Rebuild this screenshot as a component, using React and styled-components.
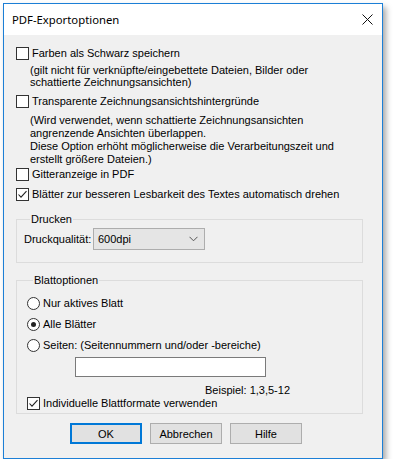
import React from 'react'
import styled, { createGlobalStyle } from 'styled-components'

const Global = createGlobalStyle`
  body {
    margin: 0;
    background: #ffffff;
    font-family: "Liberation Sans", Arial, sans-serif;
    font-size: 11px;
    color: #000;
  }
`;

const Window = styled.div`
  margin: 3px 0 0 3px;
  width: 380px;
  height: 456px;
  box-sizing: border-box;
  border: 1px solid #1c7fd6;
  background: #f0f0f0;
  box-shadow: 3px 4px 6px rgba(0, 0, 0, 0.35);
  display: flex;
  flex-direction: column;
`;

const TitleBar = styled.div`
  height: 30px;
  background: #fff;
  display: flex;
  align-items: center;
  justify-content: space-between;
  padding: 0 9px 1px 8px;
  font-family: "Noto Sans", "Open Sans", sans-serif;
  font-size: 11.3px;
  color: #000;
`;

const Body = styled.div`
  padding: 12px 0 0 12px;
  display: flex;
  flex-direction: column;
`;

const Row = styled.label`
  display: flex;
  align-items: center;
  gap: 3px;
  height: 13px;
  line-height: 13px;
  margin-top: ${({ $mt }) => $mt || 0}px;
  white-space: nowrap;
`;

const Box = styled.span`
  width: 13px;
  height: 13px;
  box-sizing: border-box;
  border: 1px solid #333;
  background: #fff;
  flex-shrink: 0;
  display: flex;
  align-items: center;
  justify-content: center;
`;

const Round = styled(Box)`
  border-radius: 50%;
  &::after {
    content: '';
    width: 5px;
    height: 5px;
    border-radius: 50%;
    background: ${({ $on }) => ($on ? '#222' : 'transparent')};
  }
`;

const Note = styled.div`
  padding-left: 14px;
  line-height: ${({ $lh }) => $lh}px;
  margin-top: ${({ $mt }) => $mt}px;
  white-space: nowrap;
`;

const Group = styled.fieldset`
  margin: ${({ $mt }) => $mt}px 0 0 0;
  width: 347px;
  box-sizing: border-box;
  border: 1px solid #dcdcdc;
  padding: ${({ $pad }) => $pad};
  display: flex;
  flex-direction: column;
  min-inline-size: 0;
`;

const Legend = styled.legend`
  margin-left: 6px;
  padding: 0 1px;
  line-height: 13px;
`;

const QualityRow = styled.div`
  display: flex;
  align-items: center;
`;

const QualityLabel = styled.span`
  width: 69px;
`;

const Combo = styled.div`
  width: 112px;
  height: 22px;
  box-sizing: border-box;
  border: 1px solid #adadad;
  background: #e5e5e5;
  display: flex;
  align-items: center;
  justify-content: space-between;
  padding: 0 6px 0 4px;
`;

const TextField = styled.div`
  margin: 5px 0 0 48px;
  width: 191px;
  height: 20px;
  box-sizing: border-box;
  border: 1px solid #7a7a7a;
  background: #fff;
`;

const Example = styled.div`
  margin: 7px 0 0 178px;
  line-height: 13px;
`;

const Buttons = styled.div`
  display: flex;
  gap: 8px;
  margin: 9px 0 0 54px;
`;

const Button = styled.button`
  width: 72px;
  height: 21px;
  box-sizing: border-box;
  font-family: "Liberation Sans", Arial, sans-serif;
  font-size: 11px;
  color: #000;
  background: #e1e1e1;
  border: 1px solid ${({ $primary }) => ($primary ? '#0078d7' : '#adadad')};
  box-shadow: ${({ $primary }) => ($primary ? 'inset 0 0 0 1px #0078d7' : 'none')};
  padding: 0;
`;

const Check = () => (
  <svg width="11" height="11" viewBox="0 0 11 11">
    <path d="M1.5 5.5 L4 8.2 L9.5 2.2" fill="none" stroke="#222" strokeWidth="1.1" />
  </svg>
);

const CheckBox = ({ checked, children, mt }) => (
  <Row $mt={mt}>
    <Box>{checked && <Check />}</Box>
    <span>{children}</span>
  </Row>
);

const Radio = ({ on, children, mt }) => (
  <Row $mt={mt}>
    <Round $on={on} />
    <span>{children}</span>
  </Row>
);

const App = () => {
  return (
    <Window>
      <Global />
      <TitleBar>
        <span>PDF-Exportoptionen</span>
        <svg width="11" height="11" viewBox="0 0 11 11">
          <path d="M0.5 0.5 L10.5 10.5 M10.5 0.5 L0.5 10.5" stroke="#111" strokeWidth="1" />
        </svg>
      </TitleBar>
      <Body>
        <CheckBox>Farben als Schwarz speichern</CheckBox>
        <Note $lh={12} $mt={4}>
          (gilt nicht für verknüpfte/eingebettete Dateien, Bilder oder<br />
          schattierte Zeichnungsansichten)
        </Note>
        <CheckBox mt={7}>Transparente Zeichnungsansichtshintergründe</CheckBox>
        <Note $lh={13} $mt={6}>
          (Wird verwendet, wenn schattierte Zeichnungsansichten<br />
          angrenzende Ansichten überlappen.<br />
          Diese Option erhöht möglicherweise die Verarbeitungszeit und<br />
          erstellt größere Dateien.)
        </Note>
        <CheckBox mt={2}>Gitteranzeige in PDF</CheckBox>
        <CheckBox mt={7} checked>Blätter zur besseren Lesbarkeit des Textes automatisch drehen</CheckBox>

        <Group $mt={12} $pad="2px 0 12px 7px">
          <Legend>Drucken</Legend>
          <QualityRow>
            <QualityLabel>Druckqualität:</QualityLabel>
            <Combo>
              <span>600dpi</span>
              <svg width="9" height="6" viewBox="0 0 9 6">
                <path d="M0.5 0.8 L4.5 4.8 L8.5 0.8" fill="none" stroke="#555" strokeWidth="1" />
              </svg>
            </Combo>
          </QualityRow>
        </Group>

        <Group $mt={11} $pad="10px 0 3px 10px">
          <Legend>Blattoptionen</Legend>
          <Radio>Nur aktives Blatt</Radio>
          <Radio mt={8} on>Alle Blätter</Radio>
          <Radio mt={8}>Seiten: (Seitennummern und/oder -bereiche)</Radio>
          <TextField />
          <Example>Beispiel: 1,3,5-12</Example>
          <CheckBox checked>Individuelle Blattformate verwenden</CheckBox>
        </Group>

        <Buttons>
          <Button $primary>OK</Button>
          <Button>Abbrechen</Button>
          <Button>Hilfe</Button>
        </Buttons>
      </Body>
    </Window>
  )
}

export default App
